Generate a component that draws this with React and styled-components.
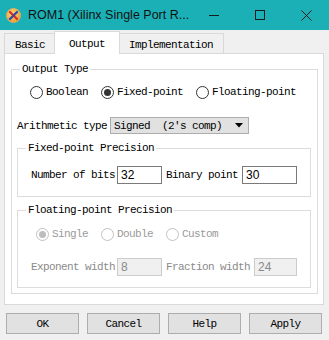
import React from 'react';
import styled, { createGlobalStyle } from 'styled-components';

const Global = createGlobalStyle`
  html, body { margin: 0; padding: 0; background: #f0f0f0; }
  body {
    width: 329px; height: 340px; overflow: hidden;
    font-family: "Liberation Mono", "DejaVu Sans Mono", monospace;
    font-size: 11px; letter-spacing: -0.6px; color: #000;
  }
  * { box-sizing: border-box; }
`;

const Window = styled.div`
  width: 329px; height: 340px; background: #f0f0f0;
  display: flex; flex-direction: column;
`;

const TitleBar = styled.div`
  height: 30px; flex-shrink: 0; background: #1bb0b6;
  display: flex; align-items: center;
`;

const AppIcon = styled.svg`
  margin-left: 6px; width: 15px; height: 15px; flex-shrink: 0;
`;

const Title = styled.div`
  margin-left: 7px; flex: 1; white-space: nowrap; overflow: hidden;
  font-family: "Liberation Sans", Arial, sans-serif; font-size: 12.5px;
  letter-spacing: 0; color: #111;
`;

const Caption = styled.div`
  display: flex; height: 30px;
`;

const CaptionButton = styled.div`
  width: 46px; height: 30px;
  display: flex; align-items: center; justify-content: center;
`;

const Body = styled.div`
  padding: 0 5px 0 4px; display: flex; flex-direction: column;
`;

const TabBar = styled.div`
  display: flex; align-items: flex-end; height: 24px;
  margin-bottom: -1px; position: relative; z-index: 1;
`;

const Tab = styled.div`
  height: ${p => (p.$active ? 23 : 20)}px;
  margin: ${p => (p.$active ? '0 -2px 0 -2px' : '0 0 1px 0')};
  padding: ${p => (p.$active ? '2px 14px 0' : '3px 10px 0')};
  border: 1px solid #d9d9d9;
  border-bottom: none;
  background: ${p => (p.$active ? '#fff' : '#f0f0f0')};
  display: flex; align-items: center;
  position: relative; z-index: ${p => (p.$active ? 2 : 1)};
  white-space: pre;
`;

const Panel = styled.div`
  background: #fff; border: 1px solid #d9d9d9;
  padding: 15px 5px 10px 6px;
  display: flex; flex-direction: column;
`;

const GroupBox = styled.div`
  border: 1px solid #dcdcdc;
  display: flex; flex-direction: column;
  margin: ${p => p.$margin || '0'};
`;

const Legend = styled.div`
  align-self: flex-start;
  margin: -8px 0 0 8px; padding: 0 2px;
  height: 14px; line-height: 14px;
  background: #fff; white-space: pre;
`;

const Row = styled.div`
  display: flex; align-items: center;
  height: ${p => p.$h || 16}px;
  margin-top: ${p => p.$mt || 0}px;
  margin-bottom: ${p => p.$mb || 0}px;
  padding-left: ${p => p.$pl || 0}px;
  gap: ${p => (p.$gap !== undefined ? p.$gap : 0)}px;
`;

const Label = styled.span`
  white-space: pre; line-height: 16px;
  color: ${p => (p.$disabled ? '#8a8a8a' : '#000')};
  margin-right: ${p => p.$mr || 0}px;
`;

const RadioItem = styled.label`
  display: flex; align-items: center; gap: 3px;
  color: ${p => (p.$disabled ? '#9a9a9a' : '#000')};
  white-space: pre;
`;

const RadioCircle = styled.span`
  width: 13px; height: 13px; border-radius: 50%;
  border: 1px solid ${p => (p.$disabled ? '#c2c2c2' : '#333')};
  background: #fff;
  display: flex; align-items: center; justify-content: center;
  &::after {
    content: '';
    width: 7px; height: 7px; border-radius: 50%;
    background: ${p => (p.$disabled ? '#bdbdbd' : '#333')};
    display: ${p => (p.$checked ? 'block' : 'none')};
  }
`;

const Select = styled.div`
  width: 139px; height: 17px;
  background: #e1e1e1; border: 1px solid #adadad;
  display: flex; align-items: center; justify-content: space-between;
  padding: 0 5px 0 3px; white-space: pre;
`;

const Input = styled.div`
  width: ${p => p.$w}px; height: 18px;
  background: ${p => (p.$disabled ? '#f0f0f0' : '#fff')};
  border: 1px solid ${p => (p.$disabled ? '#cccccc' : '#7a7a7a')};
  display: flex; align-items: center; padding-left: 3px;
  font-family: "Liberation Sans", Arial, sans-serif; font-size: 12px;
  letter-spacing: 0;
  color: ${p => (p.$disabled ? '#8a8a8a' : '#000')};
  margin-right: ${p => p.$mr || 0}px;
`;

const ButtonRow = styled.div`
  display: flex; gap: 8px; margin: 8px 0 0 2px;
`;

const Button = styled.div`
  width: 73px; height: 21px;
  background: #e1e1e1; border: 1px solid #adadad;
  display: flex; align-items: center; justify-content: center;
  padding-top: 1px;
`;

const Radio = ({ label, checked, disabled }) => (
  <RadioItem $disabled={disabled}>
    <RadioCircle $checked={checked} $disabled={disabled} />
    {label}
  </RadioItem>
);

export default function App() {
  return (
    <Window>
      <Global />
      <TitleBar>
        <AppIcon viewBox="0 0 15 15">
          <defs>
            <radialGradient id="g" cx="0.45" cy="0.4" r="0.6">
              <stop offset="0" stopColor="#ffe08a" />
              <stop offset="1" stopColor="#f09a2c" />
            </radialGradient>
          </defs>
          <circle cx="7.5" cy="7.5" r="7" fill="url(#g)" stroke="#e8b060" strokeWidth="0.8" />
          <path d="M4 4 L11 11" stroke="#d8302a" strokeWidth="2.4" strokeLinecap="round" />
          <path d="M11 4 L4 11" stroke="#2c4fa6" strokeWidth="2.4" strokeLinecap="round" />
          <path d="M7.5 6 L9 7.5 L7.5 9 L6 7.5 Z" fill="#8a2a6a" />
        </AppIcon>
        <Title>ROM1 (Xilinx Single Port R...</Title>
        <Caption>
          <CaptionButton>
            <svg width="10" height="10" viewBox="0 0 10 10">
              <path d="M0 5.5 H10" stroke="#1a1a1a" strokeWidth="1" />
            </svg>
          </CaptionButton>
          <CaptionButton>
            <svg width="10" height="10" viewBox="0 0 10 10">
              <rect x="0.5" y="0.5" width="9" height="9" fill="none" stroke="#1a1a1a" strokeWidth="1" />
            </svg>
          </CaptionButton>
          <CaptionButton>
            <svg width="11" height="11" viewBox="0 0 11 11">
              <path d="M0.5 0.5 L10.5 10.5 M10.5 0.5 L0.5 10.5" stroke="#1a1a1a" strokeWidth="1" />
            </svg>
          </CaptionButton>
        </Caption>
      </TitleBar>

      <Body>
        <TabBar>
          <Tab>Basic</Tab>
          <Tab $active>Output</Tab>
          <Tab>Implementation</Tab>
        </TabBar>

        <Panel>
          <GroupBox>
            <Legend>Output Type</Legend>
            <Row $mt={8} $pl={18} $gap={13}>
              <Radio label="Boolean" />
              <Radio label="Fixed-point" checked />
              <Radio label="Floating-point" />
            </Row>
            <Row $mt={17} $h={17} $pl={5}>
              <Label $mr={3}>Arithmetic type</Label>
              <Select>
                <span>Signed  (2's comp)</span>
                <svg width="8" height="5" viewBox="0 0 8 5">
                  <path d="M0 0 H8 L4 4.5 Z" fill="#000" />
                </svg>
              </Select>
            </Row>

            <GroupBox $margin="14px 6px 0 5px">
              <Legend>Fixed-point Precision</Legend>
              <Row $mt={11} $mb={12} $h={18} $pl={13}>
                <Label $mr={2}>Number of bits</Label>
                <Input $w={45} $mr={4}>32</Input>
                <Label $mr={4}>Binary point</Label>
                <Input $w={55}>30</Input>
              </Row>
            </GroupBox>

            <GroupBox $margin="13px 6px 5px 5px">
              <Legend>Floating-point Precision</Legend>
              <Row $mt={9} $pl={18} $gap={13}>
                <Radio label="Single" checked disabled />
                <Radio label="Double" disabled />
                <Radio label="Custom" disabled />
              </Row>
              <Row $mt={16} $mb={11} $h={18} $pl={13}>
                <Label $disabled $mr={2}>Exponent width</Label>
                <Input $disabled $w={45} $mr={4}>8</Input>
                <Label $disabled $mr={4}>Fraction width</Label>
                <Input $disabled $w={43}>24</Input>
              </Row>
            </GroupBox>
          </GroupBox>
        </Panel>

        <ButtonRow>
          <Button>OK</Button>
          <Button>Cancel</Button>
          <Button>Help</Button>
          <Button>Apply</Button>
        </ButtonRow>
      </Body>
    </Window>
  );
}
